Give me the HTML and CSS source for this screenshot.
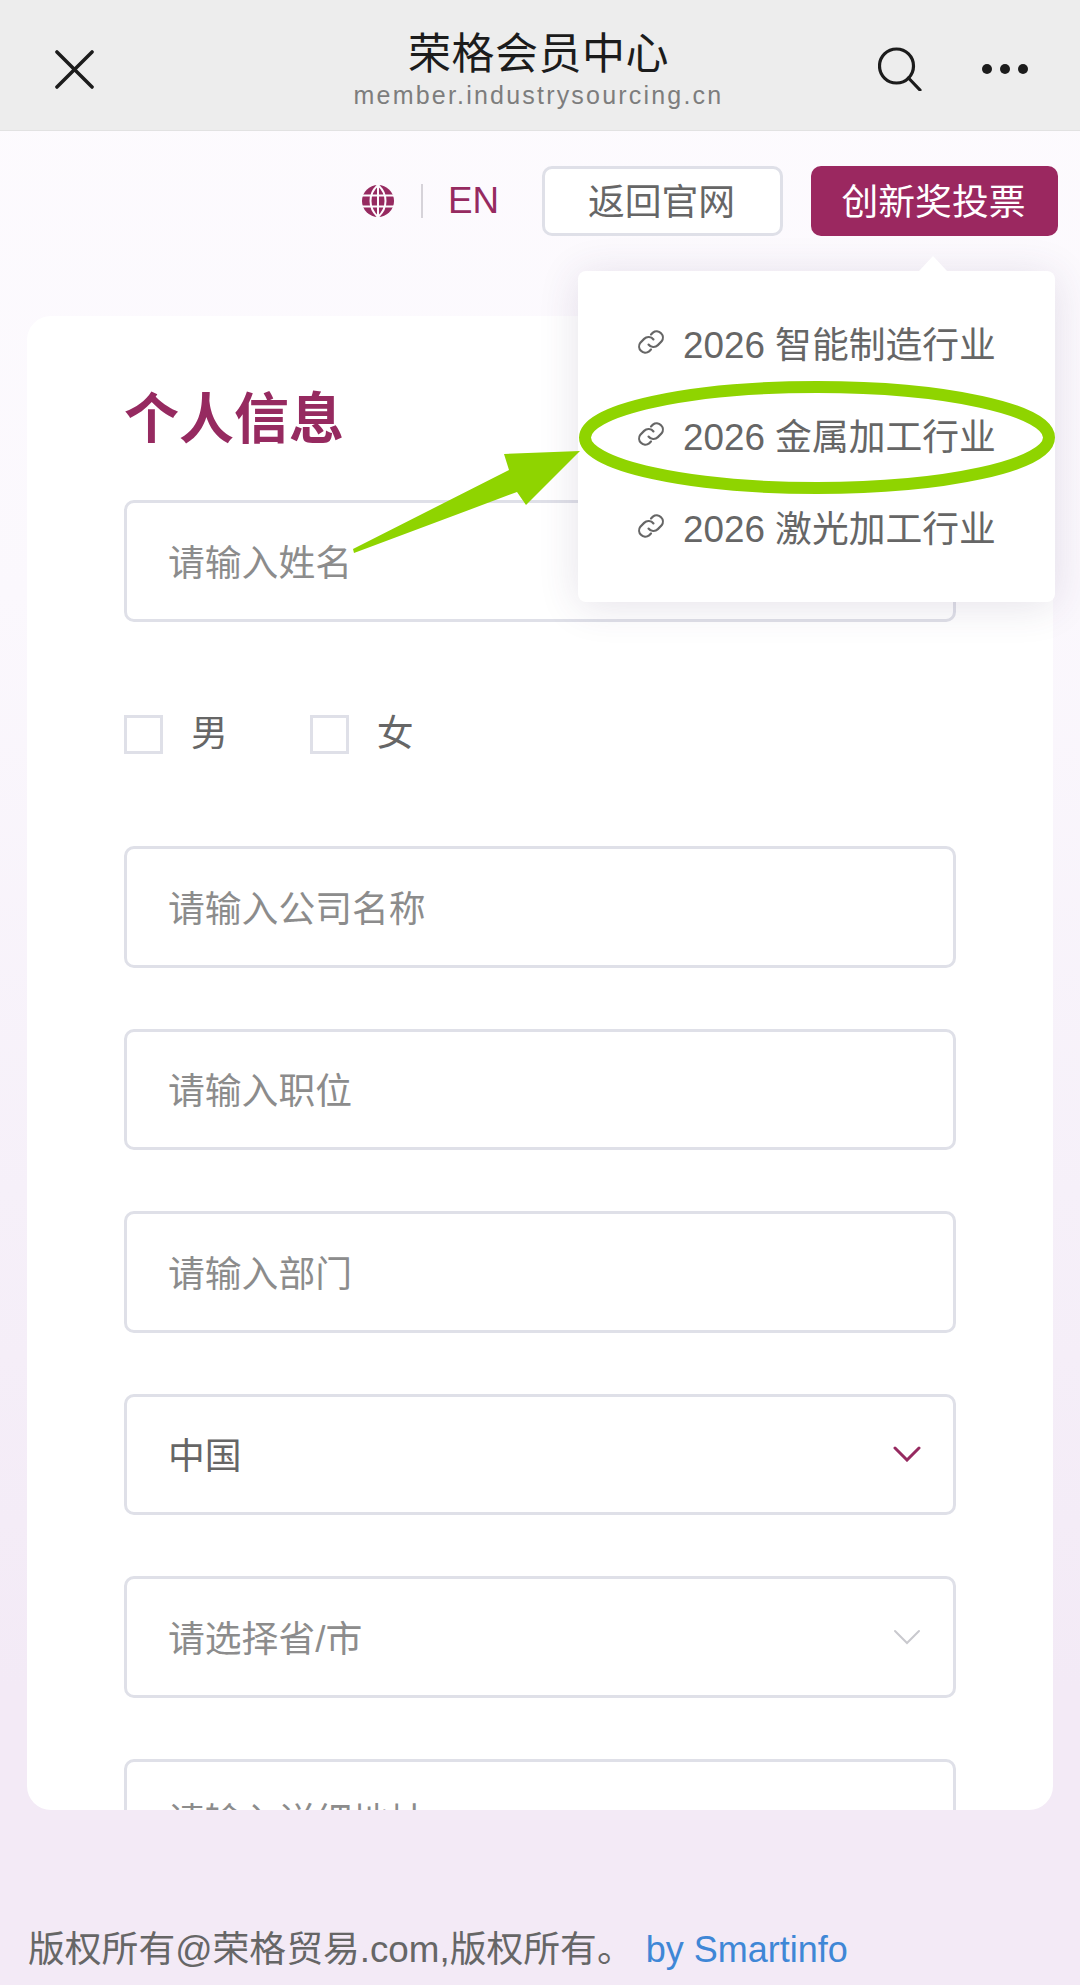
FILE: index.html
```html
<!DOCTYPE html>
<html lang="zh-CN">
<head>
<meta charset="utf-8">
<title>荣格会员中心</title>
<link rel="stylesheet" href="styles.css">
</head>
<body>
<div class="page">
  <header class="nav">
    <svg class="nav-close" viewBox="0 0 40 40"><path d="M2 2 38 38M38 2 2 38"/></svg>
    <div class="nav-title">
      <div class="nav-name">荣格会员中心</div>
      <div class="nav-url">member.industrysourcing.cn</div>
    </div>
    <svg class="nav-search" viewBox="0 0 44 44"><circle cx="18.500" cy="19" r="17"/><path d="M30.500 31 42 43"/></svg>
    <div class="nav-dots"><i></i><i></i><i></i></div>
  </header>

  <div class="toolbar">
    <svg class="globe" viewBox="0 0 32 32">
      <circle class="globe-disc" cx="16" cy="16" r="16"/>
      <path class="globe-lines" d="M0 10.500H32M0 21.500H32M16 0V32M16 0C6 9 6 23 16 32M16 0C26 9 26 23 16 32"/>
    </svg>
    <span class="sep"></span>
    <span class="lang">EN</span>
    <a class="btn btn-ghost">返回官网</a>
    <a class="btn btn-primary">创新奖投票</a>
  </div>

  <main class="card">
    <h2 class="card-title">个人信息</h2>
    <div class="field field-first">请输入姓名</div>
    <div class="gender">
      <span class="check"></span><span class="gender-label">男</span>
      <span class="check check-second"></span><span class="gender-label">女</span>
    </div>
    <div class="field">请输入公司名称</div>
    <div class="field">请输入职位</div>
    <div class="field">请输入部门</div>
    <div class="field field-value">中国
      <svg class="chev chev-on" viewBox="0 0 28 16"><path d="M2 2 14 14 26 2"/></svg>
    </div>
    <div class="field">请选择省/市
      <svg class="chev chev-off" viewBox="0 0 28 16"><path d="M2 2 14 14 26 2"/></svg>
    </div>
    <div class="field">请输入详细地址</div>
  </main>

  <footer class="foot">版权所有@荣格贸易.com,版权所有。<a class="foot-link">by Smartinfo</a></footer>

  <div class="menu">
    <div class="menu-item"><svg class="link" viewBox="0 0 24 24"><path d="M10 14a5 5 0 0 0 7.500.5l3-3a5 5 0 0 0-7-7l-1.500 1.500"/><path d="M14 10a5 5 0 0 0-7.500-.5l-3 3a5 5 0 0 0 7 7l1.500-1.500"/></svg>2026 智能制造行业</div>
    <div class="menu-item"><svg class="link" viewBox="0 0 24 24"><path d="M10 14a5 5 0 0 0 7.500.5l3-3a5 5 0 0 0-7-7l-1.500 1.500"/><path d="M14 10a5 5 0 0 0-7.500-.5l-3 3a5 5 0 0 0 7 7l1.500-1.500"/></svg>2026 金属加工行业</div>
    <div class="menu-item"><svg class="link" viewBox="0 0 24 24"><path d="M10 14a5 5 0 0 0 7.500.5l3-3a5 5 0 0 0-7-7l-1.500 1.500"/><path d="M14 10a5 5 0 0 0-7.500-.5l-3 3a5 5 0 0 0 7 7l1.500-1.500"/></svg>2026 激光加工行业</div>
  </div>

  <svg class="markup" viewBox="0 0 1080 1985">
    <ellipse class="markup-ring" cx="817" cy="437.500" rx="232" ry="50.500"/>
    <polygon class="markup-arrow" points="353,549 354,553 517,492 526,505 580,451 504,454 509,470"/>
  </svg>
</div>
</body>
</html>
```
FILE: styles.css
```css
* { box-sizing: border-box; }
html, body { margin: 0; padding: 0; }
body {
  font-family: "Liberation Sans", "Noto Sans CJK SC", sans-serif;
  color: #666;
}
.page {
  position: relative;
  width: 1080px;
  height: 1985px;
  overflow: hidden;
  display: flex;
  flex-direction: column;
  background: linear-gradient(180deg, #fdfbfe 0%, #fbf8fd 30%, #f6f0f9 60%, #f3eaf6 85%, #f3eaf6 100%);
}

/* top navigation */
.nav {
  position: relative;
  flex: none;
  height: 131px;
  background: #ededed;
  border-bottom: 1px solid #e2e2e2;
}
.nav-close {
  position: absolute;
  left: 55px;
  top: 50px;
  width: 39px;
  height: 39px;
  fill: none;
  stroke: #1c1c1c;
  stroke-width: 3.600;
  stroke-linecap: round;
}
.nav-title {
  display: flex;
  flex-direction: column;
  align-items: center;
  padding: 27px 0 0 0;
  margin-left: -3px;
}
.nav-name {
  font-size: 43px;
  line-height: 54px;
  letter-spacing: .5px;
  color: #1c1c1c;
}
.nav-url {
  font-size: 25px;
  line-height: 29px;
  letter-spacing: 2.200px;
  color: #7d7d7d;
}
.nav-search {
  position: absolute;
  left: 878px;
  top: 47px;
  width: 44px;
  height: 44px;
  fill: none;
  stroke: #1c1c1c;
  stroke-width: 3.200;
  stroke-linecap: round;
}
.nav-dots {
  position: absolute;
  left: 982px;
  top: 64px;
  display: flex;
  gap: 8px;
}
.nav-dots i {
  width: 10px;
  height: 10px;
  border-radius: 50%;
  background: #1c1c1c;
}

/* language and buttons row */
.toolbar {
  flex: none;
  display: flex;
  align-items: center;
  justify-content: flex-end;
  height: 70px;
  margin-top: 35px;
  padding-right: 22px;
}
.globe { width: 32px; height: 32px; flex: none; }
.globe-disc { fill: #962a60; }
.globe-lines { fill: none; stroke: #fdfbfe; stroke-width: 2; }
.sep {
  width: 2px;
  height: 34px;
  margin: 0 25px 0 27px;
  background: #d6d3d9;
}
.lang { font-size: 36.800px; color: #962a60; margin-right: 43px; }
.btn {
  display: flex;
  align-items: center;
  justify-content: center;
  height: 70px;
  padding: 0 2px 4px 0;
  font-size: 36.800px;
  border-radius: 10px;
}
.btn-ghost {
  width: 241px;
  margin-right: 28px;
  background: #fff;
  border: 3px solid #dfe0e8;
  color: #666;
}
.btn-primary {
  width: 247px;
  background: #9b2860;
  color: #fff;
}

/* form card */
.card {
  flex: none;
  height: 1494px;
  margin: 80px 27px 0 27px;
  padding: 0 97px;
  background: #fff;
  border-radius: 24px;
  overflow: hidden;
}
.card-title {
  margin: 0;
  padding-top: 68px;
  font-size: 55px;
  line-height: 70px;
  font-weight: 700;
  color: #962a60;
}
.field {
  position: relative;
  display: flex;
  align-items: center;
  height: 121.500px;
  margin-bottom: 61px;
  padding-left: 41px;
  padding-bottom: 2px;
  background: #fff;
  border: 3px solid #dfe0e8;
  border-radius: 10px;
  font-size: 36.800px;
  color: #8c8c8c;
}
.field-first { margin-top: 46px; margin-bottom: 0; }
.field-value { color: #666; }
.gender {
  display: flex;
  align-items: center;
  height: 38px;
  margin: 93.500px 0 93px 0;
  font-size: 36.800px;
  color: #666;
}
.gender-label { padding-bottom: 9px; }
.check {
  width: 39px;
  height: 39px;
  margin-right: 28px;
  border: 3px solid #dfe0e8;
}
.check-second { margin-left: 82px; }
.chev {
  position: absolute;
  right: 32px;
  top: 50%;
  width: 28px;
  height: 16px;
  fill: none;
  stroke-linecap: round;
  margin-top: -8px;
}
.chev-on { stroke: #962a60; stroke-width: 3; }
.chev-off { stroke: #c9c9ce; stroke-width: 2; }

/* footer */
.foot {
  flex: none;
  margin-top: 116px;
  padding-left: 28px;
  font-size: 36.800px;
  line-height: 48px;
  color: #666;
  white-space: nowrap;
}
.foot-link { color: #3f87d6; margin-left: 12px; font-size: 36px; }

/* dropdown over the page */
.menu {
  position: absolute;
  left: 578px;
  top: 271px;
  width: 477px;
  height: 331px;
  padding-top: 27px;
  background: #fff;
  border-radius: 8px;
  box-shadow: 0 4px 40px rgba(70, 50, 100, .14);
}
.menu::before {
  content: "";
  position: absolute;
  left: 341px;
  top: -15px;
  border-left: 14px solid transparent;
  border-right: 14px solid transparent;
  border-bottom: 15px solid #fff;
}
.menu-item {
  display: flex;
  align-items: center;
  height: 92px;
  padding-left: 58px;
  padding-bottom: 5px;
  font-size: 36.800px;
  color: #666;
  white-space: nowrap;
}
.link {
  flex: none;
  width: 30px;
  height: 30px;
  margin-right: 17px;
  fill: none;
  stroke: #666;
  stroke-width: 1.700;
  stroke-linecap: round;
}

/* green hand-drawn markup */
.markup {
  position: absolute;
  left: 0;
  top: 0;
  width: 1080px;
  height: 1985px;
  pointer-events: none;
}
.markup-ring { fill: none; stroke: #8fd400; stroke-width: 12; }
.markup-arrow { fill: #8fd400; }
```
